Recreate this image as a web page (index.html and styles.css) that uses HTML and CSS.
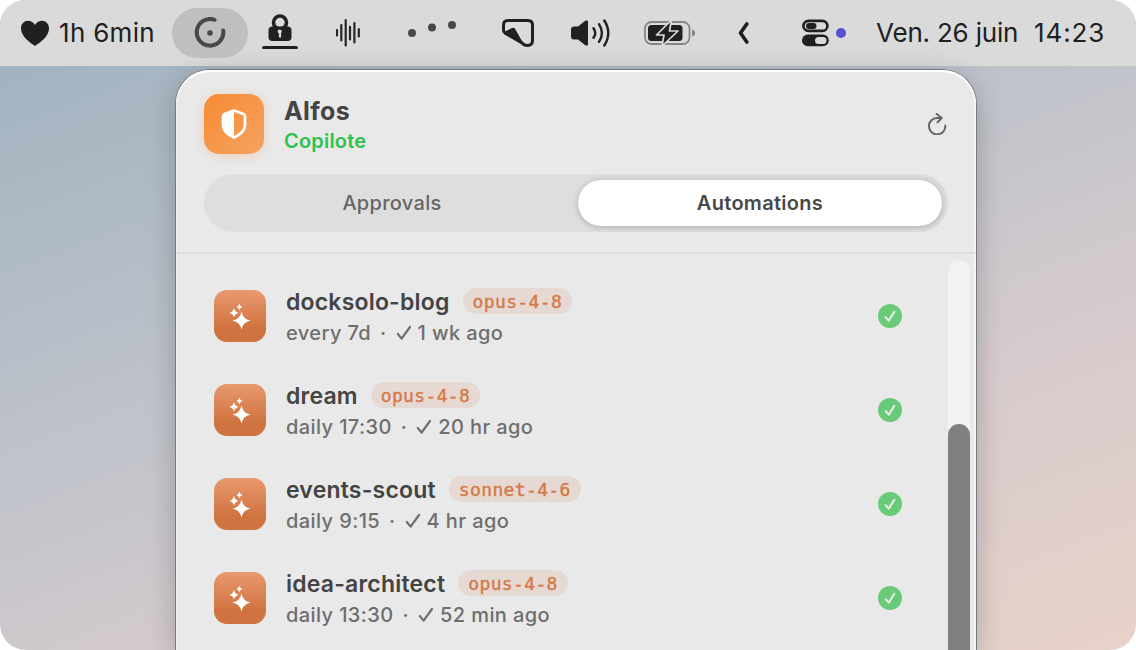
FILE: index.html
```html
<!DOCTYPE html>
<html lang="fr">
<head>
    <meta charset="utf-8">
    <title>Alfos</title>
    <link rel="stylesheet" href="styles.css">
</head>
<body>

<svg class="defs" width="0" height="0">
    <symbol id="sparkles" viewBox="0 0 52 52">
        <path d="M27.500 21.500Q28.800 29 36.500 30.500Q28.800 32 27.500 39.500Q26.200 32 18.500 30.500Q26.200 29 27.500 21.500Z"/>
        <path d="M20 18Q20.900 21.900 24.700 22.800Q20.900 23.700 20 27.600Q19.100 23.700 15.300 22.800Q19.100 21.900 20 18Z"/>
        <path d="M25.400 13.800Q26 16.400 28.600 17Q26 17.600 25.400 20.200Q24.800 17.600 22.200 17Q24.800 16.400 25.400 13.800Z"/>
    </symbol>
    <symbol id="done" viewBox="0 0 24 24">
        <circle cx="12" cy="12" r="12" fill="#69ca78"/>
        <path d="M7.600 13.200L10.700 16.700L16.300 7.900" fill="none" stroke="#ececec" stroke-width="2" stroke-linecap="round" stroke-linejoin="round"/>
    </symbol>
    <symbol id="check" viewBox="0 0 16 16">
        <path d="M1.800 9L5.600 13.600L14 2" fill="none" stroke="#6e6e6e" stroke-width="2.200" stroke-linecap="round" stroke-linejoin="round"/>
    </symbol>
</svg>

<div class="desktop">
    <!-- menu bar -->
    <div class="menubar">
        <svg class="heart" width="28" height="26" viewBox="0 0 28 26">
            <path d="M14 26C9 22.500 0 16.500 0 8.500C0 4 3 .8 7 .8C10 .8 12.600 2.500 14 5C15.400 2.500 18 .8 21 .8C25 .8 28 4 28 8.500C28 16.500 19 22.500 14 26Z" fill="#202020"/>
        </svg>
        <span class="timer">1h 6min</span>
        <span class="activeItem">
            <svg width="32" height="32" viewBox="0 0 32 32">
                <path d="M20.500 2.800A13.300 13.300 0 1 0 29.200 13.500" fill="none" stroke="#484848" stroke-width="4" stroke-linecap="round"/>
                <circle cx="16" cy="16" r="2.800" fill="#484848"/>
            </svg>
        </span>
        <svg class="lock" width="36" height="36" viewBox="0 0 36 36">
            <circle cx="18" cy="8.500" r="6.500" fill="none" stroke="#202020" stroke-width="3.600"/>
            <rect x="6.500" y="12.500" width="23" height="14.500" rx="4" fill="#202020"/>
            <path d="M18 17.300V23.500" fill="none" stroke="#dadada" stroke-width="2.200"/>
            <circle cx="17.700" cy="17.500" r="2.100" fill="#dadada"/>
            <path d="M1.500 33.500H34.500" stroke="#202020" stroke-width="3" stroke-linecap="round"/>
        </svg>
        <svg class="wave" width="24" height="28" viewBox="0 0 24 28">
            <path d="M1 11V16.500M5.300 6V21.500M9.700 1.200V26.500M14 7.800V20.500M18.400 4V23.500M22.800 10.200V17.500" stroke="#262626" stroke-width="2.200" stroke-linecap="round"/>
        </svg>
        <svg class="dots" width="48" height="16" viewBox="0 0 48 16">
            <circle cx="4" cy="12" r="4"/>
            <circle cx="24" cy="6.500" r="4"/>
            <circle cx="44" cy="4" r="4"/>
        </svg>
        <svg class="note" width="32" height="28" viewBox="0 0 32 28">
            <path d="M6 1.500H26Q30.500 1.500 30.500 6V21.500Q30.500 26.500 25.500 26.500Q22 26.500 20 24L3 14Q1.500 12.500 1.500 11V6Q1.500 1.500 6 1.500Z" fill="none" stroke="#202020" stroke-width="3"/>
            <path d="M1.500 13.500L10 9Q12 8.200 13.200 10L22.500 26.500Z" fill="#202020"/>
        </svg>
        <svg class="volume" width="39" height="28" viewBox="0 0 39 28">
            <path d="M3 7.500H7L14 2Q17 .3 17 3V25Q17 27.700 14 26L7 20.500H3Q0 20.500 0 17.500V10.500Q0 7.500 3 7.500Z" fill="#202020"/>
            <path d="M22.500 9.200Q26 14 22.500 18.800M28 5.200Q33.800 14 28 22.800M33.300 1.500Q41.300 14 33.300 26.500" fill="none" stroke="#202020" stroke-width="2.400" stroke-linecap="round"/>
        </svg>
        <svg class="battery" width="52" height="26" viewBox="0 0 52 26">
            <rect x="1" y="2" width="44.500" height="22" rx="6.500" fill="none" stroke="#858585" stroke-width="1.800"/>
            <path d="M48 9.500Q51 10.500 51 13Q51 15.500 48 16.500Z" fill="#858585"/>
            <rect x="4" y="5" width="34.500" height="16" rx="3.500" fill="#202020"/>
            <path d="M27.500 0L12.500 15H20L18 26L34 11H25.500Z" fill="#202020" stroke="#dadada" stroke-width="1.700" stroke-linejoin="round"/>
        </svg>
        <svg class="chevron" width="11" height="22" viewBox="0 0 11 22">
            <path d="M8.800 2L2.500 11L8.800 20" fill="none" stroke="#202020" stroke-width="3.600" stroke-linecap="round" stroke-linejoin="round"/>
        </svg>
        <svg class="controls" width="27" height="28" viewBox="0 0 27 28">
            <rect x="1.400" y="1.900" width="24" height="10" rx="5" fill="none" stroke="#202020" stroke-width="2.600"/>
            <rect x="4" y="4" width="10.500" height="6" rx="3" fill="#202020"/>
            <rect y="15.500" width="26.800" height="11.800" rx="5.900" fill="#202020"/>
            <rect x="13" y="18" width="11.500" height="7" rx="3.500" fill="#dadada"/>
        </svg>
        <span class="recording"></span>
        <span class="date">Ven. 26 juin</span>
        <span class="clock">14:23</span>
    </div>

    <!-- popover -->
    <div class="panel">
        <div class="header">
            <span class="appIcon">
                <svg width="26" height="30" viewBox="0 0 26 30">
                    <path d="M13 1.500L22.500 5Q24 5.600 24 7.500V16Q24 23.500 13 28.500Q2 23.500 2 16V7.500Q2 5.600 3.500 5Z" fill="none" stroke="#fff" stroke-width="2.800" stroke-linejoin="round"/>
                    <path d="M13 1.500L3.500 5Q2 5.600 2 7.500V16Q2 23.500 13 28.500Z" fill="#fff"/>
                </svg>
            </span>
            <div class="appText">
                <div class="appName">Alfos</div>
                <div class="appMode">Copilote</div>
            </div>
            <svg class="refresh" width="20" height="22" viewBox="0 0 20 22">
                <path d="M18.300 12.500A8.200 8.200 0 1 1 10 5H14.500M9.800 1L14.700 5L10.500 9.300" fill="none" stroke="#666" stroke-width="2" stroke-linecap="round" stroke-linejoin="round"/>
            </svg>
        </div>
        <div class="tabs">
            <span class="tab tabApprovals">Approvals</span>
            <span class="tab tabActive">Automations</span>
        </div>
        <div class="content">
            <div class="list">
                <div class="row">
                    <span class="rowIcon"><svg width="52" height="52"><use href="#sparkles"/></svg></span>
                    <div class="rowText">
                        <div class="rowTitle"><span class="name">docksolo-blog</span><span class="model">opus-4-8</span></div>
                        <div class="rowSub"><span>every 7d</span><span class="sep">·</span><svg width="16" height="16"><use href="#check"/></svg><span>1 wk ago</span></div>
                    </div>
                    <svg class="status" width="24" height="24"><use href="#done"/></svg>
                </div>
                <div class="row">
                    <span class="rowIcon"><svg width="52" height="52"><use href="#sparkles"/></svg></span>
                    <div class="rowText">
                        <div class="rowTitle"><span class="name">dream</span><span class="model">opus-4-8</span></div>
                        <div class="rowSub"><span>daily 17:30</span><span class="sep">·</span><svg width="16" height="16"><use href="#check"/></svg><span>20 hr ago</span></div>
                    </div>
                    <svg class="status" width="24" height="24"><use href="#done"/></svg>
                </div>
                <div class="row">
                    <span class="rowIcon"><svg width="52" height="52"><use href="#sparkles"/></svg></span>
                    <div class="rowText">
                        <div class="rowTitle"><span class="name">events-scout</span><span class="model">sonnet-4-6</span></div>
                        <div class="rowSub"><span>daily 9:15</span><span class="sep">·</span><svg width="16" height="16"><use href="#check"/></svg><span>4 hr ago</span></div>
                    </div>
                    <svg class="status" width="24" height="24"><use href="#done"/></svg>
                </div>
                <div class="row">
                    <span class="rowIcon"><svg width="52" height="52"><use href="#sparkles"/></svg></span>
                    <div class="rowText">
                        <div class="rowTitle"><span class="name">idea-architect</span><span class="model">opus-4-8</span></div>
                        <div class="rowSub"><span>daily 13:30</span><span class="sep">·</span><svg width="16" height="16"><use href="#check"/></svg><span>52 min ago</span></div>
                    </div>
                    <svg class="status" width="24" height="24"><use href="#done"/></svg>
                </div>
            </div>
            <div class="scrollbar"><div class="thumb"></div></div>
        </div>
    </div>
</div>

</body>
</html>
```
FILE: styles.css
```css
* {
	box-sizing: border-box;
}

body {
	margin: 0;
	background: #fff;
	font-family: Inter, "Liberation Sans", sans-serif;
	overflow: hidden;
}

svg {
	display: block;
	flex: none;
}

span {
	white-space: nowrap;
}

.defs {
	position: absolute;
}

.desktop {
	width: 1136px;
	height: 650px;
	border-radius: 26px;
	overflow: hidden;
	background: linear-gradient(159deg, #a0b2c0 4%, #c2c4cb 46%, #d7cbcd 70%, #e7d2c9 100%);
}

/* menu bar */
.menubar {
	display: flex;
	align-items: center;
	height: 66px;
	padding-left: 21px;
	background: #dadada;
	color: #202020;
	font-size: 26px;
}

.timer {
	width: 95px;
	margin-left: 10px;
	padding-bottom: 2px;
	letter-spacing: 0.3px;
}

.activeItem {
	display: flex;
	align-items: center;
	justify-content: center;
	width: 76px;
	height: 50px;
	margin-left: 18px;
	border-radius: 25px;
	background: #bfbfbf;
}

.lock {
	margin: 0 0 2px 14px;
}

.wave {
	margin: 0 0 1px 38px;
}

.dots {
	margin: 0 0 8px 48px;
	fill: #484848;
}

.note {
	margin-left: 46px;
}

.volume {
	margin-left: 37px;
}

.battery {
	margin-left: 34px;
}

.chevron {
	margin-left: 42px;
}

.controls {
	margin-left: 53px;
}

.recording {
	width: 10px;
	height: 10px;
	margin-left: 7px;
	border-radius: 50%;
	background: #5552cf;
}

.date {
	width: 142px;
	margin-left: 30px;
	padding-bottom: 2px;
	letter-spacing: -0.2px;
}

.clock {
	margin-left: 16px;
	padding-bottom: 2px;
	letter-spacing: 0.9px;
}

/* popover */
.panel {
	width: 800px;
	height: 580px;
	margin: 4px 0 0 176px;
	border-radius: 34px 34px 0 0;
	background: #e9e9e9;
	box-shadow: inset 0 2px 0 #fff, inset -2px 0 0 #f5f5f5, inset 1px 0 0 #f5f5f5, 0 0 0 1px #777a7f, 0 6px 28px rgba(0, 0, 0, 0.24);
}

.header {
	display: flex;
	align-items: center;
	height: 104px;
	padding: 4px 29px 0 28px;
}

.appIcon {
	display: flex;
	align-items: center;
	justify-content: center;
	width: 60px;
	height: 60px;
	border-radius: 15px;
	background: linear-gradient(135deg, #f78b32, #f4a263);
	box-shadow: 0 2px 10px rgba(245, 150, 70, 0.3);
}

.appText {
	flex: 1;
	margin-left: 20px;
	padding-top: 4px;
}

.appName {
	color: #444;
	font-size: 25px;
	font-weight: 700;
	line-height: 30px;
	letter-spacing: 0.4px;
}

.appMode {
	color: #2dc24f;
	font-size: 20px;
	font-weight: 600;
	line-height: 30px;
	letter-spacing: 0.2px;
}

.tabs {
	display: flex;
	gap: 4px;
	width: 744px;
	height: 58px;
	margin-left: 28px;
	padding: 6px;
	border-radius: 29px;
	background: #dedede;
}

.tab {
	flex: 1;
	font-size: 20px;
	font-weight: 500;
	line-height: 46px;
	text-align: center;
	letter-spacing: 0.3px;
	color: #666;
}

.tabActive {
	border-radius: 23px;
	background: #fff;
	box-shadow: 0 1px 7px rgba(0, 0, 0, 0.22);
	color: #484848;
	font-weight: 600;
}

/* automations list */
.content {
	display: flex;
	height: 398px;
	margin-top: 20px;
	border-top: 2px solid #dedede;
	overflow: hidden;
}

.list {
	flex: 1;
	padding: 15px 46px 0 38px;
}

.row {
	display: flex;
	align-items: center;
	height: 94px;
}

.rowIcon {
	width: 52px;
	height: 52px;
	border-radius: 13px;
	background: linear-gradient(#e8996f, #cf7340 75%);
	fill: #fff;
}

.rowText {
	flex: 1;
	margin-left: 20px;
	padding-top: 4px;
}

.rowTitle {
	display: flex;
	align-items: center;
	height: 30px;
}

.name {
	color: #444;
	font-size: 23px;
	font-weight: 600;
	letter-spacing: 0.2px;
}

.model {
	height: 26px;
	margin: -2px 0 0 13px;
	padding: 0 10px;
	border-radius: 13px;
	background: #e6d9d4;
	color: #d57947;
	font-family: "DejaVu Sans Mono", "Liberation Mono", monospace;
	font-size: 18px;
	line-height: 27px;
	letter-spacing: 0.35px;
	-webkit-text-stroke: 0.4px #d57947;
}

.rowSub {
	display: flex;
	align-items: center;
	height: 32px;
	color: #6e6e6e;
	font-size: 20px;
	font-weight: 500;
	letter-spacing: 0.4px;
}

.sep {
	margin: 0 9px;
}

.rowSub svg {
	margin-right: 6px;
}

.scrollbar {
	width: 22px;
	height: 390px;
	margin: 6px 6px 0 0;
	padding-top: 164px;
	border-radius: 11px 11px 0 0;
	background: #f2f2f2;
}

.thumb {
	height: 226px;
	border-radius: 11px 11px 0 0;
	background: #808080;
}
```
